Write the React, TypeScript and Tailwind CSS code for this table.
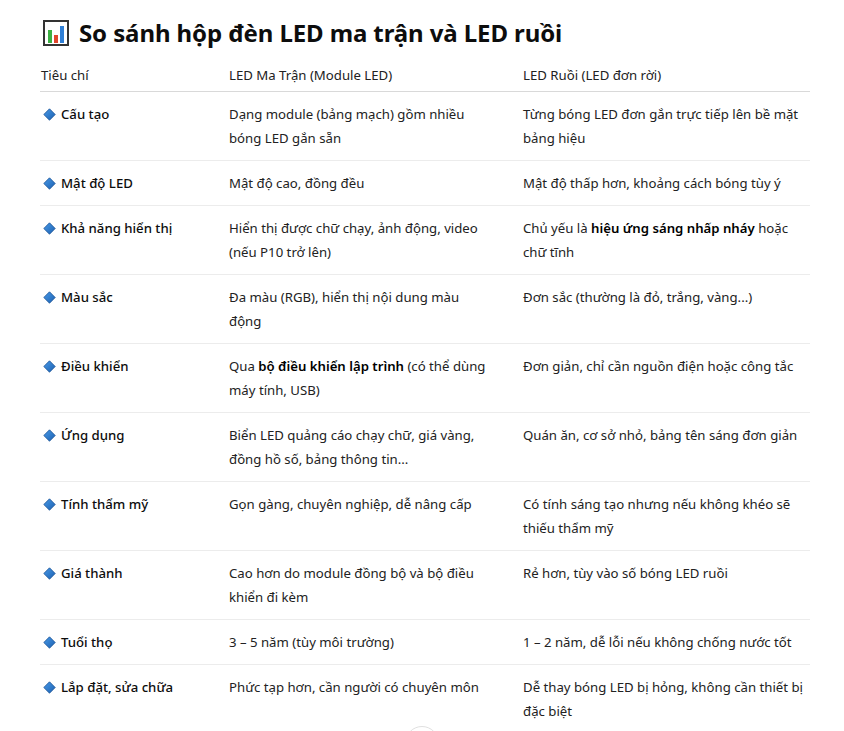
import React from "react";

const rows: { label: string; a: React.ReactNode; b: React.ReactNode }[] = [
  { label: "Cấu tạo", a: "Dạng module (bảng mạch) gồm nhiều bóng LED gắn sẵn", b: "Từng bóng LED đơn gắn trực tiếp lên bề mặt bảng hiệu" },
  { label: "Mật độ LED", a: "Mật độ cao, đồng đều", b: "Mật độ thấp hơn, khoảng cách bóng tùy ý" },
  { label: "Khả năng hiển thị", a: "Hiển thị được chữ chạy, ảnh động, video (nếu P10 trở lên)", b: (<>Chủ yếu là <strong className="font-semibold text-black">hiệu ứng sáng nhấp nháy</strong> hoặc chữ tĩnh</>) },
  { label: "Màu sắc", a: "Đa màu (RGB), hiển thị nội dung màu động", b: "Đơn sắc (thường là đỏ, trắng, vàng...)" },
  { label: "Điều khiển", a: (<>Qua <strong className="font-semibold text-black">bộ điều khiển lập trình</strong> (có thể dùng máy tính, USB)</>), b: "Đơn giản, chỉ cần nguồn điện hoặc công tắc" },
  { label: "Ứng dụng", a: "Biển LED quảng cáo chạy chữ, giá vàng, đồng hồ số, bảng thông tin...", b: "Quán ăn, cơ sở nhỏ, bảng tên sáng đơn giản" },
  { label: "Tính thẩm mỹ", a: "Gọn gàng, chuyên nghiệp, dễ nâng cấp", b: "Có tính sáng tạo nhưng nếu không khéo sẽ thiếu thẩm mỹ" },
  { label: "Giá thành", a: "Cao hơn do module đồng bộ và bộ điều khiển đi kèm", b: "Rẻ hơn, tùy vào số bóng LED ruồi" },
  { label: "Tuổi thọ", a: "3 – 5 năm (tùy môi trường)", b: "1 – 2 năm, dễ lỗi nếu không chống nước tốt" },
  { label: "Lắp đặt, sửa chữa", a: "Phức tạp hơn, cần người có chuyên môn", b: "Dễ thay bóng LED bị hỏng, không cần thiết bị đặc biệt" },
];

function Diamond() {
  return (
    <svg width="13" height="13" viewBox="0 0 13 13" className="shrink-0">
      <defs>
        <linearGradient id="dg" x1="0" y1="0" x2="1" y2="1">
          <stop offset="0" stopColor="#4a9be8" />
          <stop offset="1" stopColor="#1a5fb0" />
        </linearGradient>
      </defs>
      <path d="M6.5 0.8 L12.2 6.5 L6.5 12.2 L0.8 6.5 Z" fill="url(#dg)" stroke="#164f93" strokeWidth="0.8" />
    </svg>
  );
}

function ChartIcon() {
  return (
    <svg width="26" height="26" viewBox="0 0 26 26" className="shrink-0">
      <rect x="1" y="1" width="24" height="24" fill="#fff" stroke="#333" strokeWidth="2" />
      <rect x="5" y="10" width="4" height="13" fill="#3cb043" />
      <rect x="11" y="15" width="4" height="8" fill="#e0452b" />
      <rect x="17" y="6" width="4" height="17" fill="#2f7fd6" />
    </svg>
  );
}

export default function App() {
  return (
    <div className="relative w-[844px] h-[731px] overflow-hidden bg-white" style={{ fontFamily: '"Noto Sans", "Open Sans", sans-serif' }}>
      <div className="pl-[40px] pr-[34px] pt-[17px]">
        <div className="flex items-center gap-[10px] h-[32px] pl-[3px]">
          <ChartIcon />
          <h2 className="text-[24px] font-bold leading-[32px] text-[#0d0d0d] tracking-[-0.1px]">So sánh hộp đèn LED ma trận và LED ruồi</h2>
        </div>
        <div className="mt-[10px] text-[13.2px] leading-[24px] text-[#222]">
          <div className="grid grid-cols-[189px_294px_1fr] border-b border-[#d9d9d9] pb-[4px] pt-[4px]">
            <div className="pl-[1px]">Tiêu chí</div>
            <div>LED Ma Trận (Module LED)</div>
            <div>LED Ruồi (LED đơn rời)</div>
          </div>
          {rows.map((r, i) => (
            <div key={i} className={`grid grid-cols-[189px_294px_1fr] py-[10px] ${i < rows.length - 1 ? "border-b border-[#ececec]" : ""}`}>
              <div className="flex items-start gap-[5px] pl-[3px] font-medium text-[#0d0d0d]">
                <span className="h-[24px] flex items-center"><Diamond /></span>
                <span>{r.label}</span>
              </div>
              <div className="pr-[36px]">{r.a}</div>
              <div>{r.b}</div>
            </div>
          ))}
        </div>
      </div>
      <div className="absolute left-[405px] top-[726px] w-[34px] h-[34px] rounded-full border border-[#e0e0e0] bg-white" />
    </div>
  );
}
